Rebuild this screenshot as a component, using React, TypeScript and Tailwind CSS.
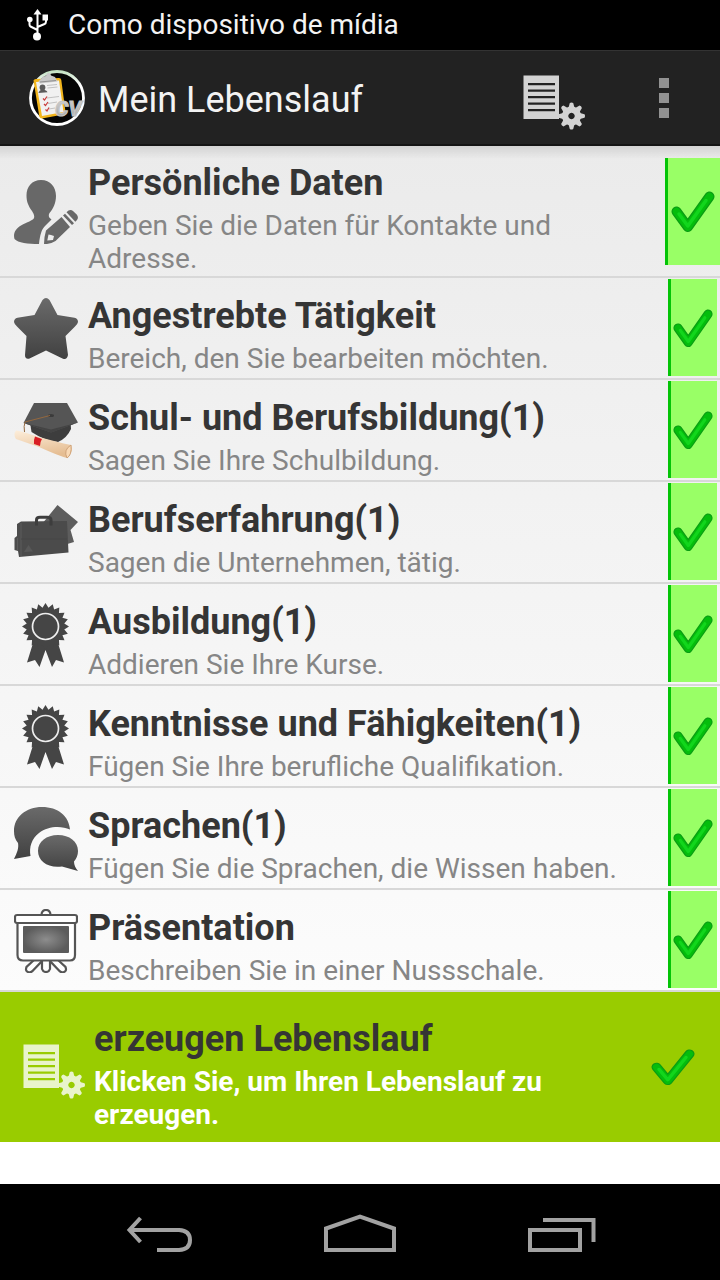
import React from "react";

type IconProps = { className?: string };

function UsbIcon() {
  return (
    <svg width="22" height="32" viewBox="0 0 22 32" fill="none" stroke="#fff" strokeWidth="2" aria-hidden="true">
      <path d="M10.500 4V26M10.500 21L3.500 17.500Q2.500 17 2.500 15.500V11M10.500 18L17.500 15Q19 14.300 19 12.500V9" />
      <g fill="#fff" stroke="none">
        <path d="M10.500 0L14.500 5.500H6.500Z" />
        <circle cx="10" cy="27.500" r="4" />
        <circle cx="2.800" cy="10.500" r="2.800" />
        <path d="M15.500 5.500h5.500v6h-5.500z" />
      </g>
    </svg>
  );
}

function AppLogo() {
  return (
    <svg width="56" height="56" viewBox="0 0 56 56" aria-hidden="true">
      <defs>
        <linearGradient id="ring" x1="0" y1="0" x2="0" y2="1">
          <stop offset="0" stopColor="#c5e3c5" />
          <stop offset="0.25" stopColor="#fff" />
        </linearGradient>
        <linearGradient id="silver" x1="0" y1="0" x2="0" y2="1">
          <stop offset="0" stopColor="#d8d8d8" />
          <stop offset="1" stopColor="#9a9a9a" />
        </linearGradient>
      </defs>
      <circle cx="28" cy="28" r="26.500" fill="#050505" stroke="url(#ring)" strokeWidth="2.800" />
      <path d="M4.500 10.500Q5 9 7 9L30 8Q32 8 32.300 10L36.500 42Q36.500 44 34.500 44.500L13 48.500Q11 48.500 10.300 46.500Z" fill="#f2b51c" />
      <path d="M7 12L30 10.500L34.500 42L13 46Z" fill="#f1f1f1" />
      <path d="M9.500 11.500L14 6.500L17 6Q17.500 2.500 20 3Q22 3.500 22 5.500L26 7L28.500 11.500L11 13.500Z" fill="#c9c9c9" />
      <path d="M11 12L27 10.500" stroke="#909090" strokeWidth="1.200" />
      <circle cx="13.500" cy="17.500" r="2.900" fill="#5b5b5b" />
      <path d="M9.500 23Q10 20 13.500 19.700Q17.500 19.500 18.500 22.200Z" fill="#5b5b5b" />
      <g stroke="#bbb" strokeWidth="0.900">
        <path d="M18 15.500L28 14.500M18.500 18L28.500 17M18 28L30 26.500M19 33.500L28 32M20 39L26 38" />
      </g>
      <g stroke="#c93a3a" strokeWidth="1.200" fill="none">
        <path d="M14 28.500L15.500 30L18 26.500M15 34L16.500 35.500L19 32M16.500 39.500L18 41L20 37.500" />
      </g>
      <text x="26" y="46" fontFamily="Roboto, sans-serif" fontSize="21" fontWeight="700" fontStyle="italic" fill="url(#silver)" stroke="#c4c4c4" strokeWidth="1.200">CV</text>
    </svg>
  );
}

function DocumentGearIcon({ className }: IconProps) {
  const teeth = [0, 45, 90, 135, 180, 225, 270, 315];
  return (
    <svg width="62" height="56" viewBox="0 0 62 56" className={className} aria-hidden="true">
      <path
        fill="currentColor"
        fillRule="evenodd"
        d="M0.500 0.500h35.500v43.500H0.500ZM5 8v2.200h27V8ZM5 14.500v2.200h27v-2.200ZM5 21v2.200h27V21ZM5 27.500v2.200h27v-2.200ZM5 34v2.200h27V34Z"
      />
      <path
        fill="currentColor"
        fillRule="evenodd"
        d="M48.500 31.400a9.600 9.600 0 1 0 .01 0ZM48.500 37.800a3.200 3.200 0 1 1-.01 0Z"
      />
      <g fill="currentColor">
        {teeth.map((a) => (
          <path key={a} d="M45.300 33.500L46.800 28Q48.500 27 50.200 28L51.700 33.500Z" transform={`rotate(${a} 48.500 41)`} />
        ))}
      </g>
    </svg>
  );
}

function Check({ className }: IconProps) {
  return (
    <svg viewBox="0 0 44 42" preserveAspectRatio="none" className={className} fill="none" strokeLinecap="round" strokeLinejoin="round" role="img" aria-label="Fertig">
      <path d="M5.500 20.500L16.800 36L38.500 5.500" stroke="#0b9c14" strokeWidth="10" />
      <path d="M5.500 20.500L16.800 36L38.500 5.500" stroke="#05bd0c" strokeWidth="7.500" />
      <path d="M8 23L16.800 35L35 9.500" stroke="#12d61c" strokeWidth="3.500" />
    </svg>
  );
}

function Svg64({ children }: { children: React.ReactNode }) {
  return (
    <svg width="64" height="64" viewBox="0 0 64 64" className="shrink-0" aria-hidden="true">
      <defs>
        <linearGradient id="shade" x1="0" y1="0" x2="0" y2="1">
          <stop offset="0" stopColor="#6a6a6a" />
          <stop offset="1" stopColor="#414141" />
        </linearGradient>
        <radialGradient id="screen">
          <stop offset="0" stopColor="#8d8d8d" />
          <stop offset="1" stopColor="#5c5c5c" />
        </radialGradient>
        <linearGradient id="scroll" x1="0" y1="0" x2="0.300" y2="1">
          <stop offset="0" stopColor="#fdeedb" />
          <stop offset="1" stopColor="#e5bd92" />
        </linearGradient>
      </defs>
      {children}
    </svg>
  );
}

function PersonIcon() {
  return (
    <Svg64>
      <g fill="#686868">
        <path d="M27 0C36.500 0 42 7 42 16C42 23 39 29 35.500 33C34 36 35 38 37.500 39.500L31 46C27.500 49.500 26 55 25 64C14 64 4 63 0.500 59C-1 54 1 49 7 45.500C13 42 19 40.500 20 38C20.700 35.500 19.500 33.500 18 31C14.500 26 12.500 22 12.500 15.500C12.500 6.500 18 0 27 0Z" />
        <path fillRule="evenodd" d="M32 50.500L47.500 37L56 47L41.500 61Q36 64.500 30 64Q30 57 32 50.500ZM34.500 54.500L33.300 60.500L39 60L40 56L37 55Z" />
        <path d="M49 35.500L51 33.700L60 43.200L58 45ZM52.500 32.300L54.500 30.500Q57 29.300 59 31L62.700 34.500Q65 37.500 63 40L61.300 41.800Z" />
      </g>
    </Svg64>
  );
}

function StarIcon() {
  return (
    <Svg64>
      <path
        fill="url(#shade)"
        d="M28.500 3Q32 -1 35.500 3L43.500 18L60.500 20.700Q64 21.500 64 25Q63.500 27.500 61 29.500L51.500 39L54 58Q53 63 49 61.700L32 53.500L15 61.700Q11 62.500 11 58L12.500 39L3 29.500Q0.500 27.500 0 25Q0 21.500 3.500 20.700L20.500 18Z"
      />
    </Svg64>
  );
}

function GraduationIcon() {
  return (
    <Svg64>
      <path d="M16 23L17.500 33Q31 42 44 43Q53 39 57 30L56.500 23Z" fill="#3d3d3d" />
      <path d="M20 4H53L64 23.500L37 33.500L9.500 24Z" fill="#555" />
      <path d="M10 24L37 33.500L64 23.500L37 30.500Z" fill="#444" />
      <ellipse cx="37" cy="16.500" rx="3" ry="1.500" fill="#3b3b3b" />
      <path d="M36 16.500L11 23Q9.500 27 10.500 33" stroke="#94683f" strokeWidth="1" fill="none" />
      <path d="M2 31.500Q4 31 25 38Q43 43 57 46Q60 53 53 59Q45 57 25 48L2 40Q-1 35.500 2 31.500Z" fill="url(#scroll)" />
      <path d="M57 46Q49 51 53 59Q58 56 57 46Z" fill="#f9d9b5" stroke="#cfa379" strokeWidth="1" />
      <path d="M21 37.500L28 40Q26 43 26 47L20 45Q19.500 41 21 37.500Z" fill="#d91e24" />
    </Svg64>
  );
}

function BriefcaseIcon() {
  return (
    <Svg64>
      <path d="M43.500 4L64 21L56.500 29L60 41L50 44L28 23Z" fill="#5d5d5d" />
      <path d="M3 23L7 20.500L53 20L54.500 51.500L5 56L4 50L0.500 49V37L3 35Z" fill="#4b4b4b" />
      <path d="M7 22V55M3.500 37V50" stroke="#5f5f5f" strokeWidth="0.800" />
      <path d="M7 38H53" stroke="#454545" strokeWidth="0.800" />
      <path d="M22.500 24.500V19Q22.500 16.300 26 16.300H33Q37 16.300 37 19V24.500" stroke="#3d3d3d" strokeWidth="3" fill="none" />
      <path d="M10 51L14.500 44L19 50.500Z" fill="#585858" />
    </Svg64>
  );
}

const rosette = Array.from({ length: 40 }, (_, i) => {
  const r = i % 2 === 0 ? 23.5 : 19;
  const a = (i * Math.PI) / 20;
  return `${(31.5 + r * Math.sin(a)).toFixed(2)},${(23.5 - r * Math.cos(a)).toFixed(2)}`;
}).join(" ");

function AwardIcon() {
  return (
    <Svg64>
      <path d="M20 37L13 59.500L21 57L25.500 64L31.500 47L38 64L42 57L50 59.500L43 37Z" fill="#454545" />
      <polygon points={rosette} fill="#454545" />
      <circle cx="31.500" cy="23.500" r="13" fill="#454545" stroke="#eee" strokeWidth="1.700" />
    </Svg64>
  );
}

function ChatIcon() {
  return (
    <Svg64>
      <path fill="url(#shade)" d="M28 0C44 0 55 9 56 22.500C47 18.500 34 19 25 26C17.500 32 15 40 16.500 49L0 52C3 46 5 41 4 36C1 32 0 29 0 24C0 10 12 0 28 0Z" />
      <path fill="url(#shade)" d="M44 28C55.500 28 64 34.500 64 44C64 48.500 62.500 51.500 60 54.500C60 58 61.500 61 64 64L48 59.500C34 61.500 24 54 24 44C24 34.500 32.500 28 44 28Z" />
    </Svg64>
  );
}

function BoardIcon() {
  return (
    <Svg64>
      <g fill="#fff" stroke="#555" strokeWidth="2.200">
        <path d="M27.500 7V5.500Q28 1 32 1T36.500 5.500V7" />
        <path d="M20 51L12.500 58Q11 62 14 63Q17 64 19 61.500L29 51ZM44 51L51.500 58Q53 62 50 63Q47 64 45 61.500L35 51Z" />
        <path d="M28 51V60Q29 63 32 63T36 60V51Z" />
        <path d="M3.500 12H61V46Q61 51.500 56 51.500H9Q3.500 51.500 3.500 46Z" />
        <rect x="1" y="6" width="62" height="8" rx="2" />
      </g>
      <rect x="9" y="17" width="46" height="27" rx="1" fill="url(#screen)" />
    </Svg64>
  );
}

const sections = [
  { title: "Persönliche Daten", text: "Geben Sie die Daten für Kontakte und Adresse.", Icon: PersonIcon },
  { title: "Angestrebte Tätigkeit", text: "Bereich, den Sie bearbeiten möchten.", Icon: StarIcon },
  { title: "Schul- und Berufsbildung(1)", text: "Sagen Sie Ihre Schulbildung.", Icon: GraduationIcon },
  { title: "Berufserfahrung(1)", text: "Sagen die Unternehmen, tätig.", Icon: BriefcaseIcon },
  { title: "Ausbildung(1)", text: "Addieren Sie Ihre Kurse.", Icon: AwardIcon },
  { title: "Kenntnisse und Fähigkeiten(1)", text: "Fügen Sie Ihre berufliche Qualifikation.", Icon: AwardIcon },
  { title: "Sprachen(1)", text: "Fügen Sie die Sprachen, die Wissen haben.", Icon: ChatIcon },
  { title: "Präsentation", text: "Beschreiben Sie in einer Nussschale.", Icon: BoardIcon },
];

export default function App() {
  return (
    <div className="flex min-h-screen flex-col bg-white font-['Roboto',sans-serif]">
      <div className="flex h-[50px] items-center bg-black pl-[27px] text-[28px] text-[#f3f3f3]">
        <UsbIcon />
        <span className="ml-[19px]">Como dispositivo de mídia</span>
      </div>

      <header className="flex h-24 items-center border-t border-b-2 border-t-[#333] border-b-[#141414] bg-[#222] pl-[29px]">
        <AppLogo />
        <h1 className="ml-[13px] flex-1 pt-1 text-[36px] leading-[42px] text-[#f3f3f3]">Mein Lebenslauf</h1>
        <button type="button" aria-label="Lebenslauf erzeugen" className="pt-2.5">
          <DocumentGearIcon className="text-[#d3d3d3]" />
        </button>
        <button type="button" aria-label="Weitere Optionen" className="ml-[34px] flex w-[101px] flex-col items-center gap-[5px] pr-[11px]">
          <span className="size-2.5 bg-[#929292]" />
          <span className="size-2.5 bg-[#929292]" />
          <span className="size-2.5 bg-[#929292]" />
        </button>
      </header>

      <main className="flex-1">
        <ul className="bg-linear-to-b from-[#ebebeb] to-[#fcfcfc]">
          {sections.map(({ title, text, Icon }, i) => {
            const first = i === 0;
            return (
              <li key={title} className={first ? "bg-linear-to-b from-black/10 via-transparent via-10% to-transparent" : ""}>
                <button
                  type="button"
                  className={`flex w-full items-center border-b-2 border-[#d8d8d8] text-left ${first ? "min-h-[132px]" : "min-h-[102px]"}`}
                >
                  <span className="ml-3.5 mt-0.5 shrink-0">
                    <Icon />
                  </span>
                  <span className="ml-2.5 min-w-0 flex-1 pt-3.5 pr-10">
                    <span className="block text-[36px] leading-[42px] font-bold text-[#353535]">{title}</span>
                    <span className="mt-[5px] block text-[28px] leading-[33px] text-[#868686]">{text}</span>
                  </span>
                  <span
                    className={`flex shrink-0 items-center justify-center border-l-3 border-[#04c407] bg-[#99ff66] pt-0.5 pr-0.5 ${first ? "h-[107px] w-[55px]" : "mr-[3px] mb-px h-[97px] w-[49px]"}`}
                  >
                    <Check className={first ? "h-[42px] w-11" : "h-[39px] w-10"} />
                  </span>
                </button>
              </li>
            );
          })}
        </ul>
        <button type="button" className="flex min-h-[150px] w-full items-center bg-[#99cc00] pr-[25px] text-left">
          <DocumentGearIcon className="mt-2.5 ml-[23px] shrink-0 text-[#e9f4cb]" />
          <span className="ml-[9px] flex-1 pt-[15px] pr-12">
            <span className="block text-[36px] leading-[42px] font-bold text-[#353535]">erzeugen Lebenslauf</span>
            <span className="mt-[5px] block text-[28px] leading-[33px] font-bold text-white">
              Klicken Sie, um Ihren Lebenslauf zu erzeugen.
            </span>
          </span>
          <Check className="h-[37px] w-11 shrink-0" />
        </button>
      </main>

      <nav className="flex h-24 items-center justify-center gap-[130px] bg-black pt-2 text-[#a2a2a2]">
        <button type="button" aria-label="Zurück">
          <svg width="72" height="40" viewBox="0 0 72 40" fill="none" stroke="currentColor" strokeWidth="4" aria-hidden="true">
            <path d="M8 14H57Q68 14.500 68 24T57 34H35" />
            <path d="M18.500 2L7.500 14L18.500 26" />
          </svg>
        </button>
        <button type="button" aria-label="Startseite">
          <svg width="72" height="40" viewBox="0 0 72 40" fill="none" stroke="currentColor" strokeWidth="4" className="overflow-visible" aria-hidden="true">
            <path d="M2 34V12.500L36 0.500L70 12.500V34Z" />
          </svg>
        </button>
        <button type="button" aria-label="Letzte Apps">
          <svg width="72" height="40" viewBox="0 0 72 40" fill="none" stroke="currentColor" strokeWidth="4" aria-hidden="true">
            <path d="M4 14H54V34H4ZM17 4H67.500V26" />
          </svg>
        </button>
      </nav>
    </div>
  );
}
